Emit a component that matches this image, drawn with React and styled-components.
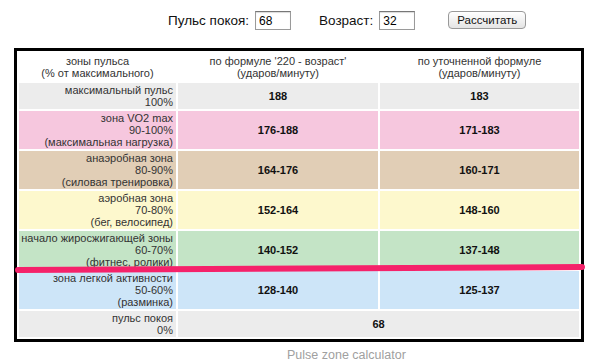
import React from 'react';
import styled, { createGlobalStyle } from 'styled-components';

const GlobalStyle = createGlobalStyle`
  html, body {
    margin: 0;
    padding: 0;
    background: #fff;
  }
  body {
    font-family: "Liberation Sans", Arial, sans-serif;
    color: #222;
  }
`;

const Page = styled.div`
  width: 592px;
  height: 364px;
  overflow: hidden;
`;

const Form = styled.form`
  display: flex;
  align-items: center;
  height: 20px;
  padding: 10px 0 0 168px;
  font-size: 13.5px;
  color: #111;
`;

const Label = styled.label`
  display: flex;
  align-items: center;
  margin-right: ${(p) => p.gap || 0}px;
`;

const Field = styled.input`
  box-sizing: border-box;
  width: 36px;
  height: 19px;
  margin-left: 6px;
  padding: 2px 3px 0;
  border: 1px solid #9a9a9a;
  border-top-color: #777;
  font-family: "Liberation Sans", Arial, sans-serif;
  font-size: 12px;
  color: #000;
  box-shadow: inset 0 1px 1px rgba(0, 0, 0, 0.15);
`;

const Button = styled.button`
  box-sizing: border-box;
  height: 18px;
  padding: 0 8px;
  border: 1px solid #999;
  border-radius: 4px;
  background: linear-gradient(#ffffff, #e4e4e4);
  font-family: "Liberation Sans", Arial, sans-serif;
  font-size: 11.5px;
  color: #111;
`;

const Wrap = styled.div`
  position: relative;
  margin: 18px 0 0 14px;
  width: 571px;
`;

const Table = styled.table`
  border: 3px solid #000;
  border-spacing: 2px;
  border-collapse: separate;
  table-layout: fixed;
  width: 570px;
  font-size: 11px;
  line-height: 12px;
`;

const Head = styled.th`
  font-weight: normal;
  text-align: center;
  padding: 1px 2px;
  color: #333;
  background: #fff;
  height: 26px;
`;

const Row = styled.tr`
  background: ${(p) => p.bg};
`;

const Zone = styled.td`
  text-align: right;
  padding: 1px 3px 1px 2px;
  color: #333;
`;

const Value = styled.td`
  text-align: center;
  font-weight: bold;
  padding: 1px 2px;
  color: #111;
`;

const Marker = styled.svg`
  position: absolute;
  left: 0;
  top: 0;
  pointer-events: none;
`;

const Caption = styled.div`
  margin: 6px 0 0 287px;
  font-size: 12.5px;
  color: #a0a0a0;
`;

const rows = [
  { bg: '#ececec', zone: ['максимальный пульс', '100%'], a: '188', b: '183' },
  { bg: '#f6c7de', zone: ['зона VO2 max', '90-100%', '(максимальная нагрузка)'], a: '176-188', b: '171-183' },
  { bg: '#e1ceb6', zone: ['анаэробная зона', '80-90%', '(силовая тренировка)'], a: '164-176', b: '160-171' },
  { bg: '#fdf8cd', zone: ['аэробная зона', '70-80%', '(бег, велосипед)'], a: '152-164', b: '148-160' },
  { bg: '#c4e4c6', zone: ['начало жиросжигающей зоны', '60-70%', '(фитнес, ролики)'], a: '140-152', b: '137-148' },
  { bg: '#cde5f8', zone: ['зона легкой активности', '50-60%', '(разминка)'], a: '128-140', b: '125-137' },
];

const Lines = ({ items }) =>
  items.map((t, i) => (
    <React.Fragment key={i}>
      {i > 0 && <br />}
      {t}
    </React.Fragment>
  ));

const App = () => {
  return (
    <Page>
      <GlobalStyle />
      <Form onSubmit={(e) => e.preventDefault()}>
        <Label gap={28}>
          Пульс покоя:
          <Field defaultValue="68" />
        </Label>
        <Label gap={33}>
          Возраст:
          <Field defaultValue="32" />
        </Label>
        <Button type="submit">Рассчитать</Button>
      </Form>

      <Wrap>
        <Table>
          <colgroup>
            <col style={{ width: 157 }} />
            <col style={{ width: 200 }} />
            <col style={{ width: 199 }} />
          </colgroup>
          <thead>
            <tr>
              <Head>зоны пульса<br />(% от максимального)</Head>
              <Head>по формуле '220 - возраст'<br />(ударов/минуту)</Head>
              <Head>по уточненной формуле<br />(ударов/минуту)</Head>
            </tr>
          </thead>
          <tbody>
            {rows.map((r) => (
              <Row key={r.a} bg={r.bg}>
                <Zone><Lines items={r.zone} /></Zone>
                <Value>{r.a}</Value>
                <Value>{r.b}</Value>
              </Row>
            ))}
            <Row bg="#ececec">
              <Zone>пульс покоя<br />0%</Zone>
              <Value colSpan={2}>68</Value>
            </Row>
          </tbody>
        </Table>
        <Marker width="580" height="300" viewBox="0 0 580 300">
          <line x1="4" y1="222" x2="568" y2="219" stroke="#f5226a" strokeWidth="6" strokeLinecap="round" />
        </Marker>
      </Wrap>

      <Caption>Pulse zone calculator</Caption>
    </Page>
  );
};

export default App;
